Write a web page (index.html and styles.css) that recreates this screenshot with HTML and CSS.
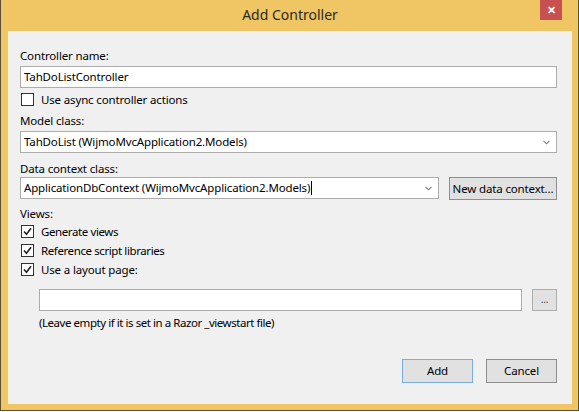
FILE: index.html
```html
<!DOCTYPE html>
<html lang="en">
<head>
    <meta charset="UTF-8">
    <meta name="viewport" content="width=device-width, initial-scale=1.0">
    <title>Add Controller</title>
    <link rel="stylesheet" href="styles.css">
</head>
<body>

    <div class="window">
        <div class="titlebar">
            <span></span>
            <span class="title">Add Controller</span>
            <span class="close">&#x2715;</span>
        </div>

        <div class="content">
            <div class="label">Controller name:</div>
            <div class="textbox">TahDoListController</div>

            <div class="check-row first-check">
                <span class="checkbox"></span>
                <span>Use async controller actions</span>
            </div>

            <div class="label gap-model">Model class:</div>
            <div class="textbox combo">
                <span>TahDoList (WijmoMvcApplication2.Models)</span>
                <svg class="chevron" width="7" height="5" viewBox="0 0 7 5"><path d="M0.5 0.8 L3.5 3.8 L6.5 0.8" fill="none" stroke="#7a7a7a" stroke-width="1.1"/></svg>
            </div>

            <div class="label gap-context">Data context class:</div>
            <div class="row">
                <div class="textbox combo grow">
                    <span>ApplicationDbContext (WijmoMvcApplication2.Models)<span class="caret"></span></span>
                    <svg class="chevron" width="7" height="5" viewBox="0 0 7 5"><path d="M0.5 0.8 L3.5 3.8 L6.5 0.8" fill="none" stroke="#7a7a7a" stroke-width="1.1"/></svg>
                </div>
                <div class="btn btn-new">New data context...</div>
            </div>

            <div class="label gap-views">Views:</div>
            <div class="check-row">
                <span class="checkbox"><svg width="11" height="11" viewBox="0 0 11 11"><path d="M2 5.5 L4.5 8.2 L9 2.2" fill="none" stroke="#222" stroke-width="1.6"/></svg></span>
                <span class="tight">Generate views</span>
            </div>
            <div class="check-row">
                <span class="checkbox"><svg width="11" height="11" viewBox="0 0 11 11"><path d="M2 5.5 L4.5 8.2 L9 2.2" fill="none" stroke="#222" stroke-width="1.6"/></svg></span>
                <span class="tight">Reference script libraries</span>
            </div>
            <div class="check-row">
                <span class="checkbox"><svg width="11" height="11" viewBox="0 0 11 11"><path d="M2 5.5 L4.5 8.2 L9 2.2" fill="none" stroke="#222" stroke-width="1.6"/></svg></span>
                <span>Use a layout page:</span>
            </div>

            <div class="indent">
                <div class="row gap-layout">
                    <div class="textbox grow"></div>
                    <div class="btn btn-browse">...</div>
                </div>
                <div class="label hint">(Leave empty if it is set in a Razor _viewstart file)</div>
            </div>

            <div class="actions">
                <div class="btn btn-default">Add</div>
                <div class="btn">Cancel</div>
            </div>
        </div>
    </div>

</body>
</html>
```

FILE: styles.css
```css
html, body { margin: 0; background: #ffffff; }
body { font-family: "Noto Sans", "Open Sans", Arial, sans-serif; font-size: 11.5px; letter-spacing: -0.15px; color: #000; }

.window { width: 579px; height: 411px; box-sizing: border-box; background: #f0c564; border: 1px solid #5e5035; border-top: none; padding: 0 6px 6px 7px; display: flex; flex-direction: column; box-shadow: 0 1px 1px rgba(0,0,0,0.25); }

.titlebar { height: 31px; display: grid; grid-template-columns: 1fr auto 1fr; align-items: start; }
.title { font-size: 14px; letter-spacing: 0; color: #2d2a22; line-height: 30px; }
.close { justify-self: end; margin-right: 10px; width: 22px; height: 20px; background: #c75050; color: #fff; font-size: 11px; font-weight: bold; line-height: 20px; text-align: center; }

.content { flex: 1; background: #f0f0f0; border: 1px solid #f8f1de; padding: 16px 14px 20px 11px; display: flex; flex-direction: column; }

.label { line-height: 16px; }
.gap-model { margin-top: 6px; }
.gap-context { margin-top: 8px; }
.gap-views { margin-top: 6px; }
.hint { margin-top: 4px; letter-spacing: -0.45px; }
.tight { letter-spacing: -0.4px; }

.textbox { height: 22px; box-sizing: border-box; border: 1px solid #acacac; background: #fff; padding: 0 3px; line-height: 20px; margin-top: 2px; white-space: nowrap; }
.combo { display: flex; align-items: center; justify-content: space-between; padding-right: 6px; }
.caret { display: inline-block; width: 1px; height: 14px; background: #000; vertical-align: -3px; margin-left: 1px; }
.chevron { flex: none; }
.grow { flex: 1; }

.row { display: flex; gap: 10px; align-items: stretch; }
.row .textbox { margin-top: 0; }
.gap-layout { margin-top: 10px; }

.check-row { display: flex; align-items: center; gap: 7px; height: 19px; margin-left: 1px; }
.first-check { margin-top: 3px; height: 16px; }
.checkbox { width: 13px; height: 13px; box-sizing: border-box; border: 1px solid #333; background: #fff; display: flex; align-items: center; justify-content: center; }

.indent { margin-left: 19px; }

.btn { height: 23px; box-sizing: border-box; background: #e1e1e1; border: 1px solid #8e8e8e; line-height: 21px; text-align: center; white-space: nowrap; flex: none; }
.btn-new { width: 108px; }
.btn-browse { width: 25px; height: 22px; font-size: 10px; color: #444; line-height: 18px; border-color: #adadad; }

.actions { margin-top: auto; display: flex; justify-content: flex-end; gap: 13px; }
.actions .btn { width: 71px; height: 24px; line-height: 22px; }
.btn-default { border-color: #78aee5; }
```
